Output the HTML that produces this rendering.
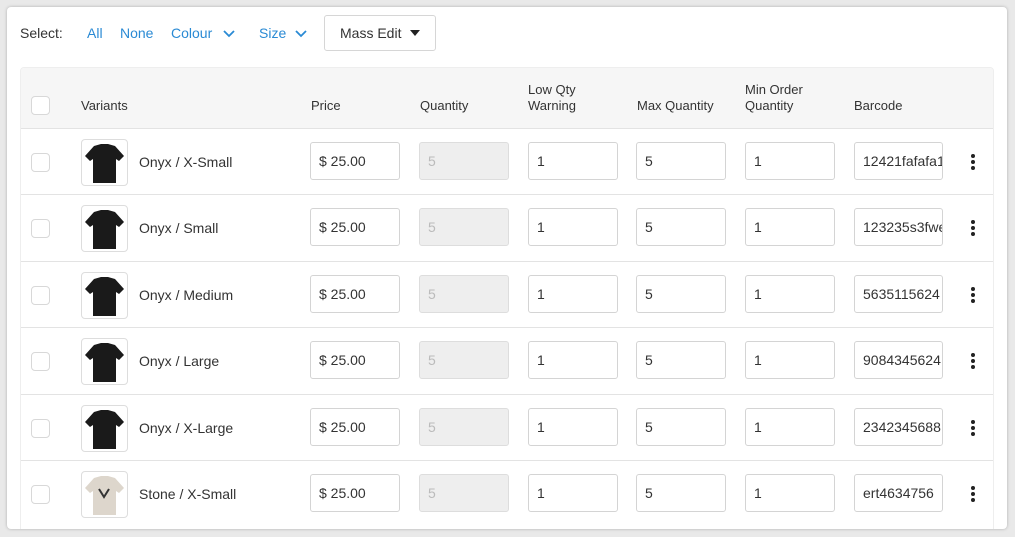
<!DOCTYPE html>
<html><head><style>
body{margin:0;width:1015px;height:537px;background:#e9e9e9;font-family:"Liberation Sans",sans-serif;overflow:hidden;position:relative;color:#333}
.card{position:absolute;left:7px;top:7px;width:1000px;height:522px;background:#fff;border-radius:4px;box-shadow:0 0 3px rgba(0,0,0,.25);overflow:hidden}
.t{position:absolute;font-size:14px;white-space:nowrap}
.blue{color:#2a8ad4}
.btn{position:absolute;left:317px;top:8px;width:112px;height:36px;border:1px solid #d6d6d6;border-radius:3px;box-sizing:border-box}
.tbl{position:absolute;left:13px;top:60px;width:972px;height:470px;border:1px solid #eee;border-radius:4px;overflow:hidden}
.hdr{position:absolute;left:0;top:0;width:100%;height:60px;background:#f6f6f6}
.row{position:absolute;left:0;width:100%;height:66px;border-top:1px solid #e3e3e3}
.cb{position:absolute;left:10px;width:17px;height:17px;border:1px solid #d8d8d8;border-radius:4px;background:#fff}
.in{position:absolute;top:13px;height:38px;width:90px;border:1px solid #d4d4d4;border-radius:3px;box-sizing:border-box;font-size:14px;line-height:36px;padding-left:8px;color:#333;background:#fff;overflow:hidden;white-space:nowrap}
.dis{background:#eee;color:#bbb;border-color:#ddd}
.th{position:absolute;left:60px;top:10px;width:47px;height:47px;border:1px solid #ddd;border-radius:4px;box-sizing:border-box;background:#fff;overflow:hidden}
.dots{position:absolute;left:950px;top:25px;width:4px}
.dots i{display:block;width:4px;height:4px;background:#222;border-radius:50%;margin-bottom:2px}
.h{position:absolute;font-size:13px;color:#333;line-height:16px}
</style></head><body>
<div class="card">
<div class="t" style="left:13px;top:18px">Select:</div>
<div class="t blue" style="left:80px;top:18px">All</div>
<div class="t blue" style="left:113px;top:18px">None</div>
<div class="t blue" style="left:164px;top:18px">Colour</div>
<svg style="position:absolute;left:216px;top:23px" width="12" height="8"><path d="M1 1l5 5 5-5" stroke="#2a8ad4" stroke-width="1.8" fill="none"/></svg>
<div class="t blue" style="left:252px;top:18px">Size</div>
<svg style="position:absolute;left:288px;top:23px" width="12" height="8"><path d="M1 1l5 5 5-5" stroke="#2a8ad4" stroke-width="1.8" fill="none"/></svg>
<div class="btn"><div class="t" style="left:15px;top:9px">Mass Edit</div><svg style="position:absolute;left:85px;top:14px" width="10" height="6"><path d="M0 0h10L5 6z" fill="#222"/></svg></div>
<div class="tbl">
<div class="hdr">
<div class="cb" style="top:28px"></div>
<div class="h" style="left:60px;top:30px">Variants</div>
<div class="h" style="left:290px;top:30px">Price</div>
<div class="h" style="left:399px;top:30px">Quantity</div>
<div class="h" style="left:507px;top:14px">Low Qty<br>Warning</div>
<div class="h" style="left:616px;top:30px">Max Quantity</div>
<div class="h" style="left:724px;top:14px">Min Order<br>Quantity</div>
<div class="h" style="left:833px;top:30px">Barcode</div>
</div>
<div class="row" style="top:60px"><div class="cb" style="top:24px"></div><div class="th"><svg width="45" height="45"><path d="M12 6l7-2h7l7 2 9 10-5 5-3-2v24H11V19l-3 2-5-5z" fill="#1a1a1a"/></svg></div><div class="t" style="left:118px;top:25px">Onyx / X-Small</div><div class="in" style="left:289px">$ 25.00</div><div class="in dis" style="left:398px">5</div><div class="in" style="left:507px">1</div><div class="in" style="left:615px">5</div><div class="in" style="left:724px">1</div><div class="in" style="left:833px;width:89px">12421fafafa123</div><div class="dots"><i></i><i></i><i></i></div></div>
<div class="row" style="top:126px"><div class="cb" style="top:24px"></div><div class="th"><svg width="45" height="45"><path d="M12 6l7-2h7l7 2 9 10-5 5-3-2v24H11V19l-3 2-5-5z" fill="#1a1a1a"/></svg></div><div class="t" style="left:118px;top:25px">Onyx / Small</div><div class="in" style="left:289px">$ 25.00</div><div class="in dis" style="left:398px">5</div><div class="in" style="left:507px">1</div><div class="in" style="left:615px">5</div><div class="in" style="left:724px">1</div><div class="in" style="left:833px;width:89px">123235s3fwe</div><div class="dots"><i></i><i></i><i></i></div></div>
<div class="row" style="top:193px"><div class="cb" style="top:24px"></div><div class="th"><svg width="45" height="45"><path d="M12 6l7-2h7l7 2 9 10-5 5-3-2v24H11V19l-3 2-5-5z" fill="#1a1a1a"/></svg></div><div class="t" style="left:118px;top:25px">Onyx / Medium</div><div class="in" style="left:289px">$ 25.00</div><div class="in dis" style="left:398px">5</div><div class="in" style="left:507px">1</div><div class="in" style="left:615px">5</div><div class="in" style="left:724px">1</div><div class="in" style="left:833px;width:89px">5635115624</div><div class="dots"><i></i><i></i><i></i></div></div>
<div class="row" style="top:259px"><div class="cb" style="top:24px"></div><div class="th"><svg width="45" height="45"><path d="M12 6l7-2h7l7 2 9 10-5 5-3-2v24H11V19l-3 2-5-5z" fill="#1a1a1a"/></svg></div><div class="t" style="left:118px;top:25px">Onyx / Large</div><div class="in" style="left:289px">$ 25.00</div><div class="in dis" style="left:398px">5</div><div class="in" style="left:507px">1</div><div class="in" style="left:615px">5</div><div class="in" style="left:724px">1</div><div class="in" style="left:833px;width:89px">9084345624</div><div class="dots"><i></i><i></i><i></i></div></div>
<div class="row" style="top:326px"><div class="cb" style="top:24px"></div><div class="th"><svg width="45" height="45"><path d="M12 6l7-2h7l7 2 9 10-5 5-3-2v24H11V19l-3 2-5-5z" fill="#1a1a1a"/></svg></div><div class="t" style="left:118px;top:25px">Onyx / X-Large</div><div class="in" style="left:289px">$ 25.00</div><div class="in dis" style="left:398px">5</div><div class="in" style="left:507px">1</div><div class="in" style="left:615px">5</div><div class="in" style="left:724px">1</div><div class="in" style="left:833px;width:89px">2342345688</div><div class="dots"><i></i><i></i><i></i></div></div>
<div class="row" style="top:392px"><div class="cb" style="top:24px"></div><div class="th"><svg width="45" height="45"><path d="M12 6l7-2h7l7 2 9 10-5 5-3-2v24H11V19l-3 2-5-5z" fill="#ddd6cc"/><path d="M17 17l5 8 5-8" stroke="#333" stroke-width="2" fill="none"/></svg></div><div class="t" style="left:118px;top:25px">Stone / X-Small</div><div class="in" style="left:289px">$ 25.00</div><div class="in dis" style="left:398px">5</div><div class="in" style="left:507px">1</div><div class="in" style="left:615px">5</div><div class="in" style="left:724px">1</div><div class="in" style="left:833px;width:89px">ert4634756</div><div class="dots"><i></i><i></i><i></i></div></div>
</div>
</div>
</body></html>
